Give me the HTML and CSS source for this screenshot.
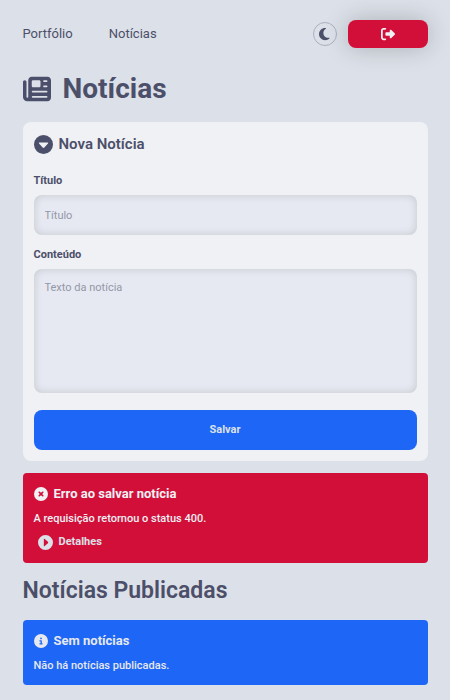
FILE: index.html
```html
<!DOCTYPE html>
<html lang="pt-BR">
<head>
<meta charset="utf-8">
<meta name="viewport" content="width=device-width, initial-scale=1">
<title>Notícias</title>
<link rel="stylesheet" href="styles.css">
</head>
<body>
<header class="topbar">
  <nav class="nav">
    <a href="#portfolio">Portfólio</a>
    <a href="#noticias">Notícias</a>
  </nav>
  <div class="actions">
    <button class="theme" type="button" aria-label="Tema escuro">
      <svg viewBox="0 0 384 512" aria-hidden="true"><path d="M223.500 32C100 32 0 132.300 0 256S100 480 223.500 480c60.600 0 115.500-24.200 155.800-63.400c5-4.900 6.300-12.500 3.100-18.700s-10.100-9.700-17-8.500c-9.800 1.700-19.800 2.600-30.100 2.600c-96.900 0-175.500-78.800-175.500-176c0-65.800 36-123.100 89.300-153.300c6.100-3.500 9.200-10.500 7.700-17.300s-7.300-11.900-14.300-12.500c-6.300-.5-12.600-.8-19-.8z"/></svg>
    </button>
    <button class="logout" type="button" aria-label="Sair">
      <svg viewBox="0 0 512 512" aria-hidden="true"><path d="M377.900 105.900L500.700 228.700c7.200 7.200 11.300 17.100 11.300 27.300s-4.100 20.100-11.300 27.300L377.900 406.100c-6.400 6.400-15 9.900-24 9.900c-18.700 0-33.900-15.200-33.900-33.900l0-62.100-128 0c-17.700 0-32-14.300-32-32l0-64c0-17.700 14.300-32 32-32l128 0 0-62.100c0-18.700 15.200-33.900 33.900-33.900c9 0 17.600 3.600 24 9.900zM160 96L96 96c-17.700 0-32 14.300-32 32l0 256c0 17.700 14.300 32 32 32l64 0c17.700 0 32 14.300 32 32s-14.300 32-32 32l-64 0c-53 0-96-43-96-96L0 128C0 75 43 32 96 32l64 0c17.700 0 32 14.300 32 32s-14.300 32-32 32z"/></svg>
    </button>
  </div>
</header>
<main>
  <h1>
    <svg viewBox="0 0 512 512" aria-hidden="true"><path d="M96 96c0-35.300 28.700-64 64-64H448c35.300 0 64 28.700 64 64V416c0 35.300-28.700 64-64 64H80c-44.200 0-80-35.800-80-80V128c0-17.700 14.300-32 32-32s32 14.300 32 32V400c0 8.800 7.200 16 16 16s16-7.200 16-16V96zm64 24v80c0 13.300 10.700 24 24 24H296c13.300 0 24-10.700 24-24V120c0-13.300-10.700-24-24-24H184c-13.300 0-24 10.700-24 24zm208-8c0 8.800 7.200 16 16 16h48c8.800 0 16-7.200 16-16s-7.200-16-16-16H384c-8.800 0-16 7.200-16 16zm0 96c0 8.800 7.200 16 16 16h48c8.800 0 16-7.200 16-16s-7.200-16-16-16H384c-8.800 0-16 7.200-16 16zM160 304c0 8.800 7.200 16 16 16H432c8.800 0 16-7.200 16-16s-7.200-16-16-16H176c-8.800 0-16 7.200-16 16zm0 96c0 8.800 7.200 16 16 16H432c8.800 0 16-7.200 16-16s-7.200-16-16-16H176c-8.800 0-16 7.200-16 16z"/></svg>
    Notícias
  </h1>

  <details class="card" open>
    <summary>
      <svg viewBox="0 0 20 20" aria-hidden="true"><path fill-rule="evenodd" d="M10 0a10 10 0 1 0 0 20a10 10 0 0 0 0-20zM5.800 7.800h8.400q1.500 0 .5 1.200l-3.800 4.200q-.9.900-1.800 0L5.300 9q-1-1.200.5-1.200z"/></svg>
      Nova Notícia
    </summary>
    <form class="form">
      <label for="titulo">Título</label>
      <input id="titulo" type="text" placeholder="Título">
      <label for="conteudo">Conteúdo</label>
      <textarea id="conteudo" rows="8" placeholder="Texto da notícia"></textarea>
      <button class="save" type="button">Salvar</button>
    </form>
  </details>

  <section class="alert error" role="alert">
    <h3>
      <svg viewBox="0 0 512 512" aria-hidden="true"><path d="M256 512A256 256 0 1 0 256 0a256 256 0 1 0 0 512zM170 170c12-12 31-12 43 0l43 43 43-43c12-12 31-12 43 0s12 31 0 43l-43 43 43 43c12 12 12 31 0 43s-31 12-43 0l-43-43-43 43c-12 12-31 12-43 0s-12-31 0-43l43-43-43-43c-12-12-12-31 0-43z"/></svg>
      Erro ao salvar notícia
    </h3>
    <p>A requisição retornou o status 400.</p>
    <details>
      <summary>
        <svg viewBox="0 0 20 20" aria-hidden="true"><path fill-rule="evenodd" d="M10 0a10 10 0 1 0 0 20a10 10 0 0 0 0-20zM7.800 5.800v8.400q0 1.500 1.200.5l4.200-3.800q.9-.9 0-1.800L9 5.300q-1.200-1-1.200.5z"/></svg>
        Detalhes
      </summary>
    </details>
  </section>

  <h2>Notícias Publicadas</h2>

  <section class="alert info">
    <h3>
      <svg viewBox="0 0 512 512" aria-hidden="true"><path d="M256 512A256 256 0 1 0 256 0a256 256 0 1 0 0 512zM216 336h24V272H216c-13.300 0-24-10.700-24-24s10.700-24 24-24h48c13.300 0 24 10.700 24 24v88h8c13.300 0 24 10.700 24 24s-10.700 24-24 24H216c-13.300 0-24-10.700-24-24s10.700-24 24-24zm40-208a32 32 0 1 1 0 64 32 32 0 1 1 0-64z"/></svg>
      Sem notícias
    </h3>
    <p>Não há notícias publicadas.</p>
  </section>
</main>
</body>
</html>
```
FILE: styles.css
```css
* {
  box-sizing: border-box;
}

body {
  margin: 0;
  padding: 20px 5% 15px;
  background: #dce0e8;
  color: #4c4f69;
  font: 11px/16px Roboto, "Liberation Sans", sans-serif;
}

svg {
  display: block;
  flex: none;
  fill: currentColor;
}

button {
  display: flex;
  align-items: center;
  justify-content: center;
  padding: 0;
  border: 0;
  font: inherit;
  cursor: pointer;
}

h1, h2, h3, p {
  margin: 0;
}

.topbar {
  display: flex;
  align-items: center;
  justify-content: space-between;
  height: 28px;
}

.nav {
  display: flex;
  gap: 36px;
  font-size: 13px;
}

.nav a {
  color: inherit;
  text-decoration: none;
}

.actions {
  display: flex;
  align-items: center;
  gap: 11px;
}

.theme {
  width: 24px;
  height: 24px;
  border: 1px solid #acb0be;
  border-radius: 50%;
  background: none;
  color: inherit;
}

.theme svg {
  height: 14px;
}

.logout {
  width: 80px;
  height: 28px;
  border-radius: 8px;
  background: #d20f39;
  color: #eff1f5;
  box-shadow: 0 0 24px rgba(0, 0, 0, 0.22);
}

.logout svg {
  width: 14px;
}

h1 {
  display: flex;
  align-items: center;
  gap: 12px;
  margin: 24px 0 16px;
  font-size: 28px;
  line-height: 34px;
}

h1 svg {
  width: 28px;
}

.card {
  padding: 11px;
  border-radius: 8px;
  background: #eff1f5;
}

summary {
  display: flex;
  align-items: center;
  gap: 6px;
  list-style: none;
  font-weight: bold;
  cursor: pointer;
}

summary::-webkit-details-marker {
  display: none;
}

.card > summary {
  font-size: 15px;
  font-weight: 600;
  line-height: 22px;
}

.card > summary svg {
  width: 19px;
}

.form {
  display: flex;
  flex-direction: column;
  margin-top: 18px;
}

.form label {
  margin-bottom: 6px;
  font-weight: bold;
}

.form input,
.form textarea {
  display: block;
  width: 100%;
  margin: 0 0 12px;
  padding: 11px;
  border: 0;
  border-radius: 8px;
  background: #e6e9f1;
  color: inherit;
  font: inherit;
  box-shadow: inset 0 0 8px rgba(0, 0, 0, 0.15);
}

.form input {
  height: 40px;
}

.form textarea {
  height: 124px;
  margin-bottom: 17px;
  resize: none;
}

.form ::placeholder {
  color: #9497a8;
}

.save {
  height: 40px;
  border-radius: 8px;
  background: #1e66f5;
  color: #dce0e8;
  font-weight: bold;
}

.alert {
  padding: 11px;
  border-radius: 4px;
  color: #eff1f5;
}

.error {
  margin-top: 12px;
  background: #d20f39;
}

.info {
  background: #1e66f5;
  color: #e6e9ef;
}

.alert h3 {
  display: flex;
  align-items: center;
  gap: 6px;
  margin-bottom: 7px;
  font-size: 13px;
  font-weight: bold;
  line-height: 20px;
}

.alert h3 svg {
  width: 14px;
}

.alert p {
  font-weight: 500;
}

.alert summary {
  margin: 7px 0 2px;
  padding: 0 4px;
  color: #dce0e8;
}

.alert summary svg {
  width: 15px;
}

h2 {
  margin: 11px 0 12px;
  font-size: 23px;
  font-weight: 600;
  line-height: 34px;
}
```
